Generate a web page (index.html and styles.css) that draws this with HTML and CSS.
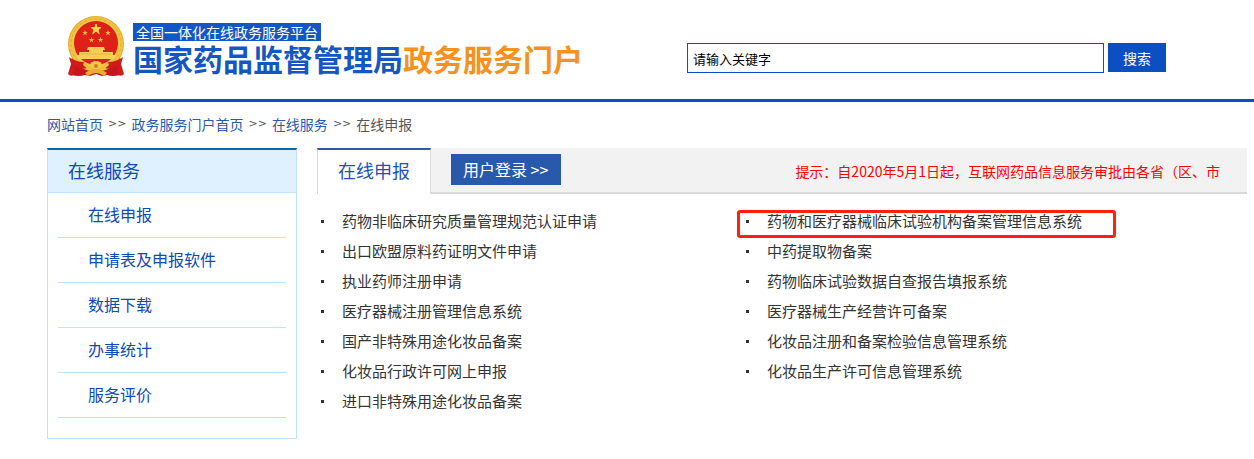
FILE: index.html
```html
<!DOCTYPE html>
<html lang="zh-CN">
<head>
    <meta charset="UTF-8">
    <meta name="viewport" content="width=device-width, initial-scale=1.0">
    <title>国家药品监督管理局政务服务门户</title>
    <link rel="stylesheet" href="styles.css">
</head>
<body>
    <header class="header">
        <a class="logo" href="#">
            <svg class="emblem" viewBox="0 0 58 62" aria-hidden="true">
                <path d="M5 42 L53 42 L53 60 Q45 62 40 60 L35 61 L29 59 L23 61 L18 60 Q12 62 5 60 Z" fill="#c4161c"/>
                <circle cx="29" cy="29" r="28" fill="#e2a92b"/>
                <circle cx="29" cy="29" r="27" fill="#f0c544"/>
                <circle cx="29" cy="29" r="25" fill="none" stroke="#e3ab2c" stroke-width="1" stroke-dasharray="3 2"/>
                <circle cx="29" cy="28" r="22" fill="#dd2018"/>
                <path d="M29 9 L30.2 12.6 L34 12.6 L31 14.8 L32.2 18.6 L29 16.2 L25.8 18.6 L27 14.8 L24 12.6 L27.8 12.6 Z" fill="#f7d04a" stroke="#f7d04a" stroke-width="1"/>
                <g fill="#f3bc3c">
                    <path d="M18 15 L18.7 17 L20.8 17 L19.1 18.3 L19.8 20.4 L18 19.1 L16.2 20.4 L16.9 18.3 L15.2 17 L17.3 17 Z"/>
                    <path d="M41 15 L41.7 17 L43.8 17 L42.1 18.3 L42.8 20.4 L41 19.1 L39.2 20.4 L39.9 18.3 L38.2 17 L40.3 17 Z"/>
                    <path d="M24.5 22 L25.2 24 L27.3 24 L25.6 25.3 L26.3 27.4 L24.5 26.1 L22.7 27.4 L23.4 25.3 L21.7 24 L23.8 24 Z"/>
                    <path d="M33.5 22 L34.2 24 L36.3 24 L34.6 25.3 L35.3 27.4 L33.5 26.1 L31.7 27.4 L32.4 25.3 L30.7 24 L32.8 24 Z"/>
                    <path d="M21 32 H37 L38 35 H36 V37 H46 V40 H49 L47 44 H11 L9 40 H12 V37 H22 V35 H20 Z" fill="#f7cf55"/>
                </g>
                <path d="M14 39 H44" stroke="#e9b23a" stroke-width="1"/>
                <path d="M2 42 Q9 47 17 47 L20 53 Q14 55 8 51 L7 60 Q3 62 1 59 L4 49 Z" fill="#cf1c1b"/>
                <path d="M56 42 Q49 47 41 47 L38 53 Q44 55 50 51 L51 60 Q55 62 57 59 L54 49 Z" fill="#cf1c1b"/>
                <path d="M17 47 Q23 54 29 48 Q35 54 41 47 L42 50 Q35 57 29 53 Q23 57 16 50 Z" fill="#f0bd3c"/>
                <ellipse cx="29" cy="50" rx="6" ry="4" fill="#f3c648"/>
                <circle cx="29" cy="51" r="2" fill="#c98a1c"/>
                <path d="M18 58 Q29 50 40 58 L37 61 Q29 55 21 61 Z" fill="#e8ad34"/>
            </svg>
            <span class="logo-text">
                <span class="tagline">全国一体化在线政务服务平台</span>
                <strong class="site-name">国家药品监督管理局<em>政务服务门户</em></strong>
            </span>
        </a>
        <form class="search">
            <input type="text" class="search-input" value="请输入关键字" aria-label="请输入关键字">
            <button type="button" class="search-button">搜索</button>
        </form>
    </header>

    <nav class="breadcrumb">
        <a href="#">网站首页</a>
        <span class="sep">&gt;&gt;</span>
        <a href="#">政务服务门户首页</a>
        <span class="sep">&gt;&gt;</span>
        <a href="#">在线服务</a>
        <span class="sep">&gt;&gt;</span>
        <span>在线申报</span>
    </nav>

    <div class="content">
        <aside class="sidebar">
            <h2>在线服务</h2>
            <ul>
                <li><a href="#">在线申报</a></li>
                <li><a href="#">申请表及申报软件</a></li>
                <li><a href="#">数据下载</a></li>
                <li><a href="#">办事统计</a></li>
                <li><a href="#">服务评价</a></li>
            </ul>
        </aside>

        <main class="main">
            <div class="main-head">
                <h2 class="tab">在线申报</h2>
                <a class="login" href="#">用户登录 &gt;&gt;</a>
                <p class="notice">提示：自2020年5月1日起，互联网药品信息服务审批由各省（区、市</p>
            </div>
            <div class="lists">
                <ul>
                    <li><a href="#">药物非临床研究质量管理规范认证申请</a></li>
                    <li><a href="#">出口欧盟原料药证明文件申请</a></li>
                    <li><a href="#">执业药师注册申请</a></li>
                    <li><a href="#">医疗器械注册管理信息系统</a></li>
                    <li><a href="#">国产非特殊用途化妆品备案</a></li>
                    <li><a href="#">化妆品行政许可网上申报</a></li>
                    <li><a href="#">进口非特殊用途化妆品备案</a></li>
                </ul>
                <ul>
                    <li class="marked"><a href="#">药物和医疗器械临床试验机构备案管理信息系统</a></li>
                    <li><a href="#">中药提取物备案</a></li>
                    <li><a href="#">药物临床试验数据自查报告填报系统</a></li>
                    <li><a href="#">医疗器械生产经营许可备案</a></li>
                    <li><a href="#">化妆品注册和备案检验信息管理系统</a></li>
                    <li><a href="#">化妆品生产许可信息管理系统</a></li>
                </ul>
            </div>
        </main>
    </div>
</body>
</html>
```
FILE: styles.css
```css
*, *::before, *::after {
    box-sizing: border-box;
}
body {
    margin: 0;
    font-family: "Noto Sans CJK SC", sans-serif;
    font-size: 14px;
    color: #333;
    background: #fff;
}
h2, ul, p {
    margin: 0;
    padding: 0;
    font-weight: normal;
}
ul {
    list-style: none;
}
a {
    color: #0c4ab4;
    text-decoration: none;
}

/* Header */
.header {
    display: flex;
    justify-content: space-between;
    align-items: flex-start;
    padding: 15px 88px 22px 67px;
    border-bottom: 3px solid #0b50c3;
}
.logo {
    display: flex;
    gap: 8px;
}
.emblem {
    width: 58px;
    height: 62px;
}
.logo-text {
    display: flex;
    flex-direction: column;
    align-items: flex-start;
    padding-top: 8px;
}
.tagline {
    padding: 0 3px;
    font-size: 14px;
    line-height: 18px;
    color: #fff;
    background: #1457c4;
}
.site-name {
    font-size: 30px;
    line-height: 34px;
    color: #1457c4;
}
.site-name em {
    font-style: normal;
    color: #f5921e;
}
.search {
    display: flex;
    align-items: flex-start;
    gap: 4px;
    width: 479px;
    padding-top: 28px;
}
.search-input {
    flex: 1;
    min-width: 0;
    height: 30px;
    padding: 0 5px;
    border: 1px solid #0b50c3;
    font-family: inherit;
    font-size: 13px;
    color: #000;
}
.search-button {
    width: 58px;
    height: 29px;
    padding: 0;
    border: 0;
    font-family: inherit;
    font-size: 14px;
    color: #fff;
    background: #0b50c3;
}

/* Breadcrumb */
.breadcrumb {
    display: flex;
    gap: 5px;
    padding: 12px 47px 14px;
    line-height: 20px;
    color: #555;
}
.breadcrumb a {
    color: #2a5aab;
}
.sep {
    font-family: "DejaVu Sans", sans-serif;
    font-size: 11px;
}

.content {
    display: flex;
    align-items: flex-start;
    gap: 20px;
    padding: 0 7px 20px 47px;
}

/* Left menu */
.sidebar {
    flex: 0 0 250px;
    padding-bottom: 20px;
    border: 1px solid #bfe2ff;
    border-top: 2px solid #0068b7;
}
.sidebar h2 {
    padding: 0 20px 2px;
    font-size: 18px;
    line-height: 40px;
    color: #0c4ab4;
    background: #dff0ff;
    border-bottom: 1px solid #bfe2ff;
}
.sidebar ul {
    padding: 0 10px;
}
.sidebar li {
    padding: 0 0 2px 30px;
    font-size: 16px;
    line-height: 42px;
    border-bottom: 1px solid #bfe2ff;
}

/* Right part */
.main {
    flex: 1;
    min-width: 0;
}
.main-head {
    display: flex;
    height: 46px;
    background: #f2f2f2;
    border-bottom: 2px solid #d9d9d9;
}
.tab {
    height: 46px;
    padding: 0 20px;
    font-size: 18px;
    line-height: 40px;
    color: #1d53b5;
    background: #fff;
    border: 1px solid #d9d9d9;
    border-top: 2px solid #2859aa;
    border-bottom: 0;
}
.login {
    margin: 6px 0 0 20px;
    padding: 0 13px 0 12px;
    height: 31px;
    font-size: 16px;
    line-height: 31px;
    color: #fff;
    background: #2859aa;
}
.notice {
    margin: 0 27px 0 auto;
    line-height: 46px;
    color: #f00;
    white-space: nowrap;
    overflow: hidden;
}
.lists {
    display: flex;
    padding-top: 12px;
}
.lists ul {
    flex: 0 1 425px;
}
.lists li {
    position: relative;
    display: flex;
    align-items: center;
    gap: 18px;
    padding-left: 4px;
    font-size: 15px;
    line-height: 30px;
    white-space: nowrap;
}
.lists li::before {
    content: "";
    width: 3px;
    height: 3px;
    background: #333;
}
.lists a {
    color: #333;
}
.marked::after {
    content: "";
    position: absolute;
    top: 4px;
    left: -5px;
    width: 379px;
    height: 28px;
    border: 3px solid #ff2010;
    border-radius: 3px;
}
```
